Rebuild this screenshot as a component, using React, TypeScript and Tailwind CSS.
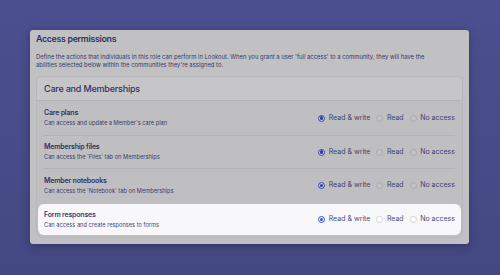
import React from 'react'

type Row = { title: string; sub: string; h: string; divider?: boolean; focus?: boolean }

const rows: Row[] = [
  { title: 'Care plans', sub: "Can access and update a Member's care plan", h: 'h-[35px]', divider: true },
  { title: 'Membership files', sub: "Can access the 'Files' tab on Memberships", h: 'h-[33px]', divider: true },
  { title: 'Member notebooks', sub: "Can access the 'Notebook' tab on Memberships", h: 'h-[33px]' },
  { title: 'Form responses', sub: 'Can access and create responses to forms', h: 'h-[31px]', focus: true },
]

const Radio = ({ checked, focus }: { checked?: boolean; focus?: boolean }) => {
  if (checked) {
    return (
      <span className={`w-[7px] h-[7px] rounded-full border flex items-center justify-center ${focus ? 'border-[#3450e0] bg-white' : 'border-[#3148b8] bg-[#cacace]'}`}>
        <span className={`w-[3.5px] h-[3.5px] rounded-full ${focus ? 'bg-[#3450e0]' : 'bg-[#2a3fb0]'}`} />
      </span>
    )
  }
  return <span className={`w-[7px] h-[7px] rounded-full border ${focus ? 'border-[#d2d3da] bg-white' : 'border-[#a8a8ae] bg-[#c4c4c6]'}`} />
}

const Options = ({ focus }: { focus?: boolean }) => {
  const label = focus ? 'text-[#4a4c84]' : 'text-[#3f4170]'
  return (
    <div className={`flex items-center text-[7px] ${label}`}>
      <div className="flex items-center gap-[3.5px]">
        <Radio checked focus={focus} />
        <span>Read &amp; write</span>
      </div>
      <div className="flex items-center gap-[3.5px] ml-[6px]">
        <Radio focus={focus} />
        <span>Read</span>
      </div>
      <div className="flex items-center gap-[3.5px] ml-[6px]">
        <Radio focus={focus} />
        <span>No access</span>
      </div>
    </div>
  )
}

const Text = ({ title, sub, focus }: { title: string; sub: string; focus?: boolean }) => (
  <div>
    <div className={`text-[7px] tracking-[-0.2px] font-semibold leading-[10px] ${focus ? 'text-[#3a3c7a]' : 'text-[#2f3165]'}`}>{title}</div>
    <div className={`text-[5.7px] leading-[10px] ${focus ? 'text-[#45477c]' : 'text-[#3b3d6c]'}`}>{sub}</div>
  </div>
)

export default function App() {
  return (
    <div
      className="w-[500px] h-[275px] bg-gradient-to-b from-[#4b4f8f] to-[#444882] pt-[30px] pl-[30px]"
      style={{ fontFamily: 'Inter, "Noto Sans", sans-serif' }}
    >
      <div className="w-[439px] h-[214px] bg-[#c1c1c3] rounded-[3px] shadow-[0_2px_8px_rgba(20,20,50,0.35)] px-[6px] pt-[3px]">
        <h1 className="text-[8.8px] tracking-[-0.3px] font-semibold text-[#2f3165] leading-[12px]">Access permissions</h1>
        <p className="mt-[8px] text-[5.9px] leading-[8px] text-[#36386a]">
          Define the actions that individuals in this role can perform in Lookout. When you grant a user 'full access' to a community, they will have the
          <br />
          abilities selected below within the communities they're assigned to.
        </p>
        <div className="mt-[7px] rounded-[5px] bg-[#bfbfc1] border border-[#b8b8ba]">
          <div className="h-[24px] flex items-center px-[7px] bg-[#c6c6c8] border-b border-[#b3b3b5] rounded-t-[5px]">
            <span className="text-[9px] tracking-[-0.2px] font-medium text-[#2f3165]">Care and Memberships</span>
          </div>
          <div className="px-[1px] pb-[2px]">
            {rows.map((r) =>
              r.focus ? (
                <div key={r.title} className={`mt-[2px] ${r.h} bg-[#f8f8fa] rounded-[6px] px-[6px] flex items-center justify-between`}>
                  <Text title={r.title} sub={r.sub} focus />
                  <Options focus />
                </div>
              ) : (
                <div key={r.title} className="mx-[6px]">
                  <div className={`${r.h} flex items-center justify-between ${r.divider ? 'border-b border-[#b2b2b4]' : ''}`}>
                    <Text title={r.title} sub={r.sub} />
                    <Options />
                  </div>
                </div>
              )
            )}
          </div>
        </div>
      </div>
    </div>
  )
}
